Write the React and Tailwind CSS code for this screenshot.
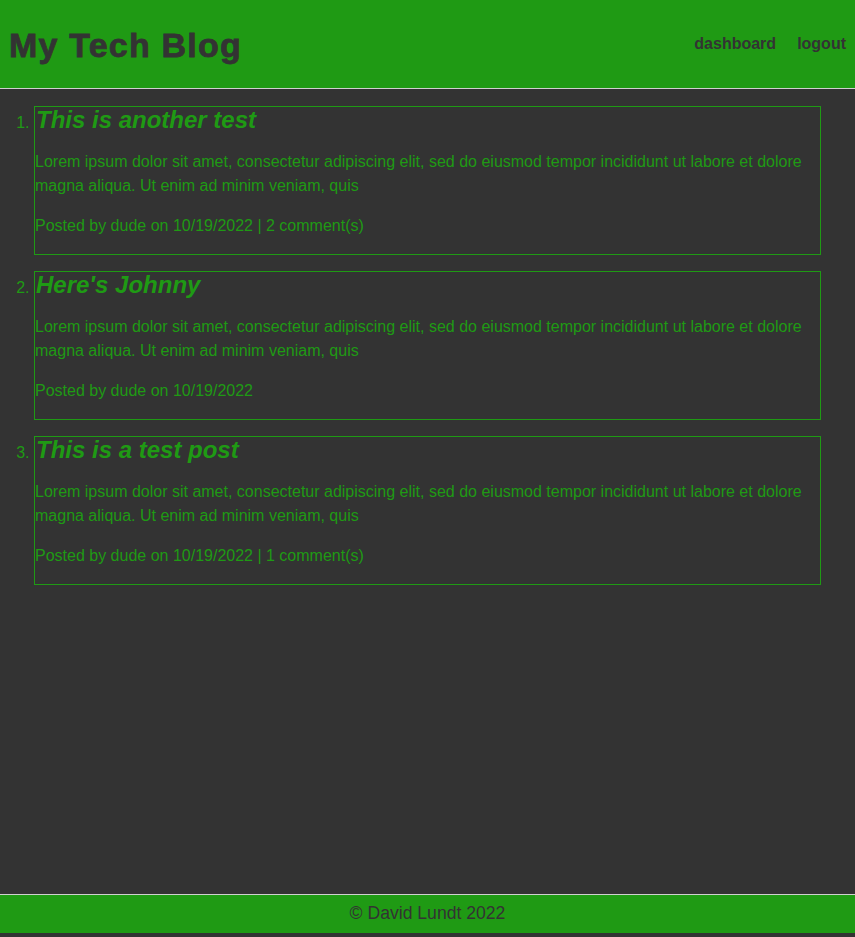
import React from "react";

const posts = [
    { title: "This is another test", date: "10/19/2022", comments: 2 },
    { title: "Here's Johnny", date: "10/19/2022", comments: 0 },
    { title: "This is a test post", date: "10/19/2022", comments: 1 },
];

const lorem =
    "Lorem ipsum dolor sit amet, consectetur adipiscing elit, sed do eiusmod tempor incididunt ut labore et dolore magna aliqua. Ut enim ad minim veniam, quis";

const App = () => {
    return (
        <div className="min-h-screen flex flex-col bg-[#333333] text-[#1f9a14] font-[family-name:'Liberation_Sans',Arial,sans-serif]">
            {/* Header */}
            <header className="h-[89px] flex items-center justify-between px-[9px] bg-[#1f9a14] border-b border-[#d0d0d0] text-[#333333]">
                <h1 className="text-[34px] font-bold leading-none pt-[2px] tracking-[1.2px] [-webkit-text-stroke:0.8px_#333333]">
                    My Tech Blog
                </h1>
                <nav className="flex gap-[21px] text-base font-bold pl-[2px]">
                    <a href="#">dashboard</a>
                    <a href="#">logout</a>
                </nav>
            </header>

            {/* Posts */}
            <main className="flex-1 pt-[17px]">
                <ol className="list-decimal list-outside pl-[34px] pr-[34px] flex flex-col gap-[16px]">
                    {posts.map((post, i) => (
                        <li key={i} className="border border-[#1f9a14]">
                            <h2 className="text-2xl font-bold italic leading-[25px] pl-[1px]">{post.title}</h2>
                            <p className="mt-[18px] text-base leading-6">{lorem}</p>
                            <p className="my-4 text-base leading-6">
                                Posted by dude on {post.date}
                                {post.comments > 0 && ` | ${post.comments} comment(s)`}
                            </p>
                        </li>
                    ))}
                </ol>
            </main>

            {/* Footer */}
            <footer className="h-[39px] mb-[4px] flex items-center justify-center bg-[#1f9a14] border-t border-[#d0d0d0] text-[#333333] text-[17.6px] pb-[1px]">
                © David Lundt 2022
            </footer>
        </div>
    );
};

export default App;
